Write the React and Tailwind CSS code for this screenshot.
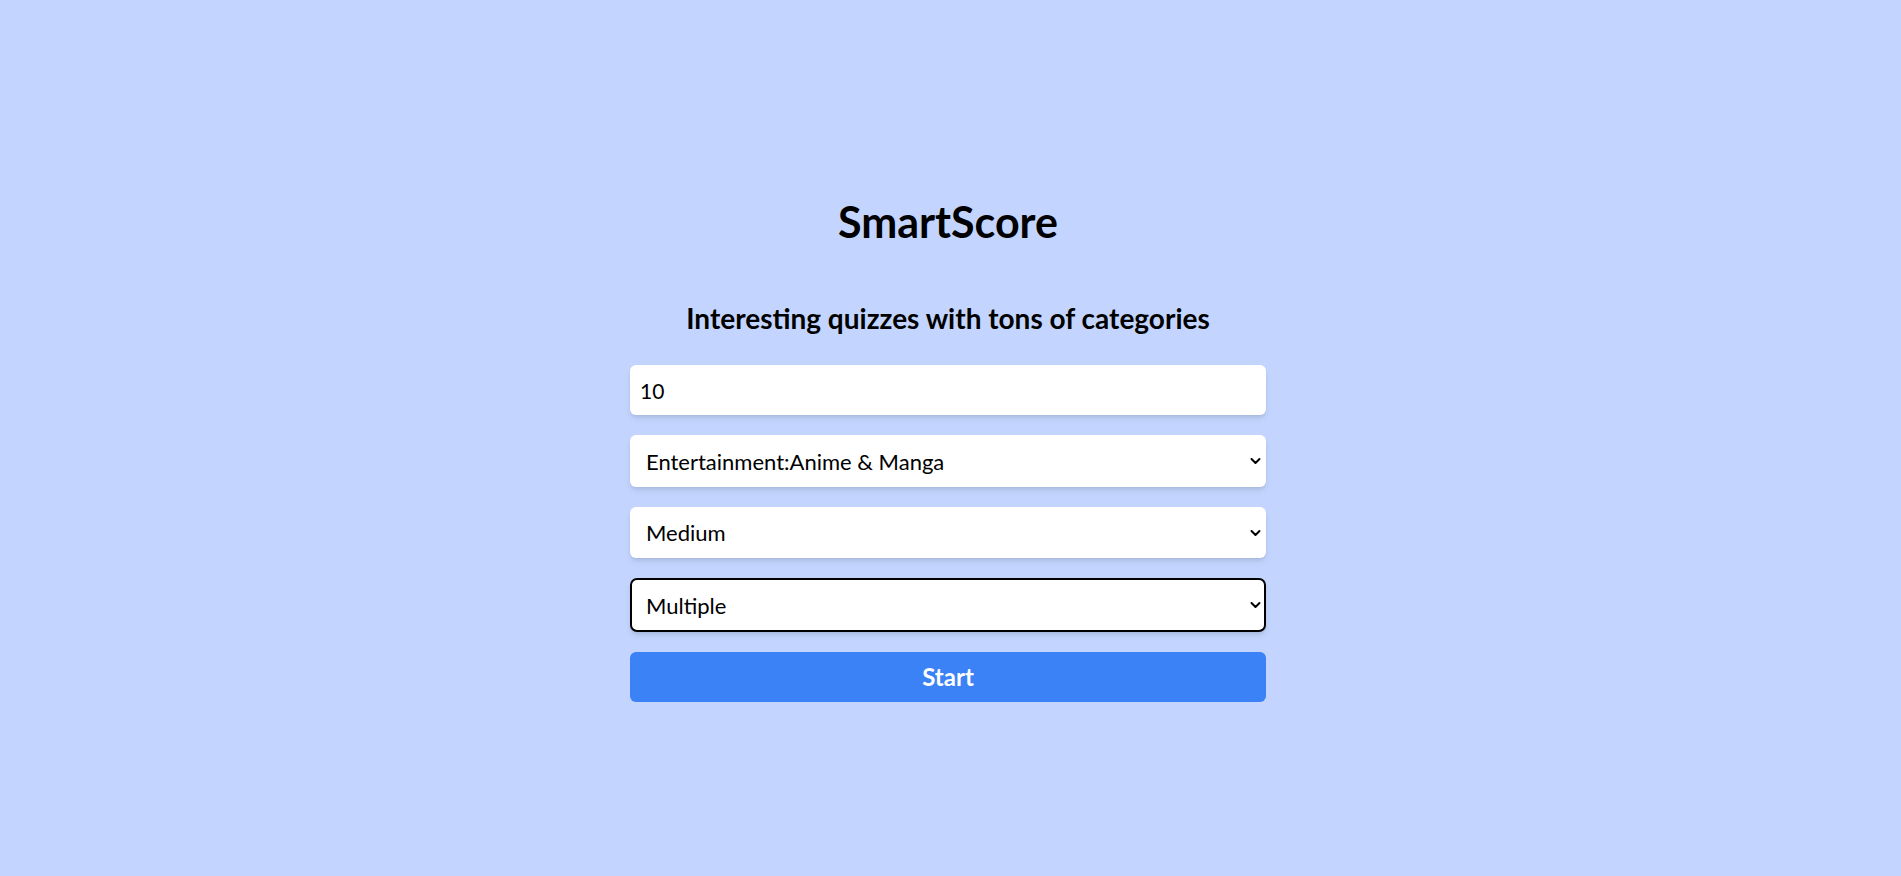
import React, { useState } from 'react'

function Chevron() {
  return (
    <svg
      className="pointer-events-none absolute right-[5px] top-1/2 -translate-y-1/2 w-[11px] h-[7px]"
      viewBox="0 0 11 7"
      fill="none"
      stroke="black"
      strokeWidth="2"
      strokeLinecap="round"
      strokeLinejoin="round"
    >
      <path d="M1.5 1.5 L5.5 5.5 L9.5 1.5" />
    </svg>
  )
}

export default function App() {
  const [amount, setAmount] = useState('10')
  const [category, setCategory] = useState('31')
  const [difficulty, setDifficulty] = useState('medium')
  const [type, setType] = useState('multiple')

  return (
    <div className="min-h-screen bg-[#c3d5fe] font-['Lato',sans-serif] text-black flex flex-col items-center pt-[197px] pr-[5px]">
      <h1 className="text-[43px] leading-[50px] font-bold">SmartScore</h1>
      <h2 className="mt-[55px] text-[28px] leading-[32px] font-bold">Interesting quizzes with tons of categories</h2>

      <form className="mt-[31px] w-[636px] flex flex-col gap-5" onSubmit={(e) => e.preventDefault()}>
        <input
          type="number"
          value={amount}
          onChange={(e) => setAmount(e.target.value)}
          className="h-[50px] rounded-md bg-white shadow-md px-2.5 text-[21px] outline-none"
        />
        <div className="relative">
          <select
            value={category}
            onChange={(e) => setCategory(e.target.value)}
            className="w-full h-[52px] appearance-none rounded-md bg-white shadow-md pl-4 pr-6 text-[22px] outline-none"
          >
            <option value="9">General Knowledge</option>
            <option value="31">Entertainment:Anime &amp; Manga</option>
            <option value="17">Science &amp; Nature</option>
          </select>
          <Chevron />
        </div>
        <div className="relative">
          <select
            value={difficulty}
            onChange={(e) => setDifficulty(e.target.value)}
            className="w-full h-[51px] appearance-none rounded-md bg-white shadow-md pl-4 pr-6 text-[22px] outline-none"
          >
            <option value="easy">Easy</option>
            <option value="medium">Medium</option>
            <option value="hard">Hard</option>
          </select>
          <Chevron />
        </div>
        <div className="relative">
          <select
            value={type}
            onChange={(e) => setType(e.target.value)}
            className="w-full h-[54px] appearance-none rounded-[7px] bg-white border-2 border-black shadow-md pl-3.5 pr-6 text-[22px] outline-none"
          >
            <option value="multiple">Multiple</option>
            <option value="boolean">True / False</option>
          </select>
          <Chevron />
        </div>
        <button className="h-[50px] rounded-md bg-[#3b82f6] text-white text-[24px] font-bold">Start</button>
      </form>
    </div>
  )
}
